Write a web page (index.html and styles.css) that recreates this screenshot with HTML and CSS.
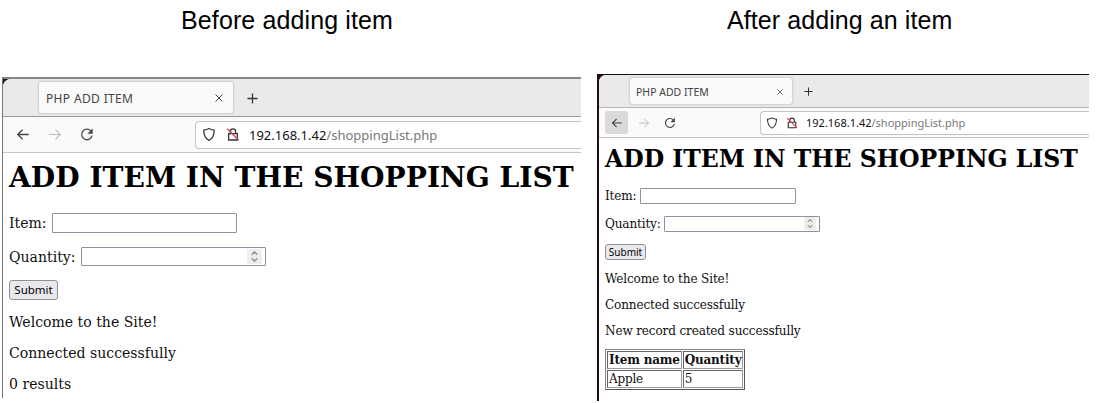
FILE: index.html
```html
<!DOCTYPE html>
<html lang="en">
<head>
<meta charset="utf-8">
<title>Shopping list</title>
<link rel="stylesheet" href="styles.css">
</head>
<body>
<svg class="defs" aria-hidden="true">
  <symbol id="back" viewBox="0 0 16 16"><path d="M14.500 8H2M7.500 2.500 2 8l5.500 5.500" fill="none" stroke="currentColor" stroke-width="1.500"/></symbol>
  <symbol id="forward" viewBox="0 0 16 16"><path d="M1.500 8H14M8.500 2.500 14 8l-5.500 5.500" fill="none" stroke="currentColor" stroke-width="1.300"/></symbol>
  <symbol id="reload" viewBox="0 0 16 16"><path d="M13.800 9.300A6 6 0 1 1 12.300 3.800" fill="none" stroke="currentColor" stroke-width="1.500"/><path d="M14.500 1v6h-6z" fill="currentColor"/></symbol>
  <symbol id="shield" viewBox="0 0 16 16"><path d="M8 1.200c2 1.300 4 1.600 6 1.700 0 5-1.300 9.600-6 11.900C3.300 12.500 2 7.900 2 2.900c2-.1 4-.4 6-1.700z" fill="none" stroke="currentColor" stroke-width="1.400"/></symbol>
  <symbol id="lock" viewBox="0 0 16 16"><path d="M3 7h10v7.300H3zM5 7V4.500a3 3 0 0 1 6 0V7" fill="none" stroke="#333" stroke-width="1.500"/><path d="m1.500 1.500 13 13" stroke="#e0405a" stroke-width="1.700"/></symbol>
  <symbol id="close" viewBox="0 0 10 10"><path d="m1.500 1.500 7 7m0-7-7 7" stroke="currentColor" stroke-width="1"/></symbol>
  <symbol id="plus" viewBox="0 0 12 12"><path d="M6 .5v11M.5 6h11" stroke="currentColor" stroke-width="1.400"/></symbol>
  <symbol id="steps" viewBox="0 0 10 14"><path d="m2 5 3-3 3 3M2 9l3 3 3-3" fill="none" stroke="#999" stroke-width="1.600"/></symbol>
</svg>
<main class="compare">
  <section class="panel before">
    <h2 class="caption">Before adding item</h2>
    <div class="window">
      <div class="frame">
        <div class="tabs">
          <div class="tab"><span class="tab-title">PHP ADD ITEM</span><svg class="close"><use href="#close"/></svg></div>
          <svg class="plus"><use href="#plus"/></svg>
        </div>
        <div class="toolbar">
          <span class="nav back"><svg class="icon"><use href="#back"/></svg></span>
          <span class="nav off"><svg class="icon"><use href="#forward"/></svg></span>
          <span class="nav"><svg class="icon"><use href="#reload"/></svg></span>
          <div class="url"><svg class="icon"><use href="#shield"/></svg><svg class="icon"><use href="#lock"/></svg><span class="address"><span class="host">192.168.1.42</span><span class="path">/shoppingList.php</span></span></div>
        </div>
        <div class="page">
          <h1>ADD ITEM IN THE SHOPPING LIST</h1>
          <div class="field item"><label>Item:</label><span class="box"></span></div>
          <div class="field quantity"><label>Quantity:</label><span class="box"><svg class="steps"><use href="#steps"/></svg></span></div>
          <div class="actions"><button>Submit</button></div>
          <p>Welcome to the Site!</p>
          <p>Connected successfully</p>
          <p>0 results</p>
        </div>
      </div>
    </div>
  </section>
  <section class="panel after">
    <h2 class="caption">After adding an item</h2>
    <div class="window">
      <div class="frame">
        <div class="tabs">
          <div class="tab"><span class="tab-title">PHP ADD ITEM</span><svg class="close"><use href="#close"/></svg></div>
          <svg class="plus"><use href="#plus"/></svg>
        </div>
        <div class="toolbar">
          <span class="nav back"><svg class="icon"><use href="#back"/></svg></span>
          <span class="nav off"><svg class="icon"><use href="#forward"/></svg></span>
          <span class="nav"><svg class="icon"><use href="#reload"/></svg></span>
          <div class="url"><svg class="icon"><use href="#shield"/></svg><svg class="icon"><use href="#lock"/></svg><span class="address"><span class="host">192.168.1.42</span><span class="path">/shoppingList.php</span></span></div>
        </div>
        <div class="page">
          <h1>ADD ITEM IN THE SHOPPING LIST</h1>
          <div class="field item"><label>Item:</label><span class="box"></span></div>
          <div class="field quantity"><label>Quantity:</label><span class="box"><svg class="steps"><use href="#steps"/></svg></span></div>
          <div class="actions"><button>Submit</button></div>
          <p>Welcome to the Site!</p>
          <p>Connected successfully</p>
          <p>New record created successfully</p>
          <table>
            <tr><th>Item name</th><th>Quantity</th></tr>
            <tr><td>Apple</td><td>5</td></tr>
          </table>
        </div>
      </div>
    </div>
  </section>
</main>
</body>
</html>
```
FILE: styles.css
```css
* { box-sizing: border-box; }
body { margin: 0; background: #fff; overflow: hidden; color: #111; }
svg { display: block; flex: none; }
.defs { display: none; }
.compare { display: flex; gap: 16px; padding-left: 2px; height: 403px; }
.panel { display: flex; flex-direction: column; }
.before { width: 579px; }
.after { width: 492px; }
.caption { margin: 0; font: 400 25px/41px "Liberation Sans", Arial, sans-serif; color: #000; white-space: nowrap; }
.before .caption { height: 77px; padding-left: 179px; letter-spacing: .12px; }
.after .caption { height: 74px; padding-left: 130px; letter-spacing: .08px; }
.window { background: #2a0c1c; }
.frame { height: 100%; overflow: hidden; background: #fff; }
.before .window { height: 321px; border-top: 2px solid #858585; border-left: 1px solid #777; }
.before .frame { border-top-left-radius: 8px; }
.after .window { height: 327px; border-top: 1px solid #111; border-left: 2px solid #220a16; }
.after .frame { border-top-left-radius: 7px; }

.tabs { display: flex; background: #eaeaea; border-bottom: 1px solid #b5b5b5; }
.before .tabs { height: 38px; padding: 2px 0 0 35px; gap: 13px; border-color: #999; }
.after .tabs { height: 33px; padding: 2px 0 0 30px; gap: 11px; }
.tab { display: flex; align-items: center; justify-content: space-between; background: #fafafa; border: 1px solid #d4d4d4; border-radius: 4px; box-shadow: 0 0 2px #ccc; font-family: "Noto Sans", sans-serif; color: #444; white-space: nowrap; }
.before .tab { width: 196px; height: 33px; padding: 1px 9px 0 7px; font-size: 12px; letter-spacing: .35px; }
.after .tab { width: 164px; height: 28px; padding: 1px 8px 0 6px; font-size: 10.5px; letter-spacing: 0; }
.before .close { width: 10px; height: 10px; }
.after .close { width: 8px; height: 8px; }
.plus { color: #333; }
.before .plus { width: 11px; height: 11px; margin-top: 12px; }
.after .plus { width: 9px; height: 9px; margin-top: 10px; }

.toolbar { display: flex; align-items: center; background: #fafafa; border-bottom: 1px solid #c5c5c5; }
.before .toolbar { height: 36px; padding-left: 4px; }
.after .toolbar { height: 30px; padding-left: 6px; }
.nav { display: flex; align-items: center; justify-content: center; color: #444; border-radius: 3px; }
.before .nav { width: 32px; height: 28px; }
.after .nav { width: 23px; height: 23px; margin-right: 4px; }
.after .back { background: #dadada; }
.after .off { margin-right: 3px; }
.nav.off { color: #bbb; }
.before .icon { width: 14px; height: 15px; }
.after .icon { width: 12px; height: 12px; }
.url { flex: 1; display: flex; align-items: center; background: #fff; border: 1px solid #c4c4c4; border-right: 0; border-radius: 4px 0 0 4px; color: #333; font-family: "Noto Sans", sans-serif; }
.before .url { height: 28px; margin-left: 92px; padding-left: 6px; gap: 10px; font-size: 13px; }
.after .url { height: 24px; margin-left: 75px; padding-left: 5px; gap: 8px; font-size: 11px; }
.address { display: flex; white-space: nowrap; }
.before .address { margin-left: -1px; }
.host { color: #111; }
.path { color: #777; }

.page { font-family: "DejaVu Serif", serif; white-space: nowrap; }
.before .page { padding-left: 6px; font-size: 14.07px; }
.after .page { padding-left: 6px; font-size: 12.1px; letter-spacing: -.17px; }
h1, p { margin: 0; }
h1 { font-size: 2em; color: #000; }
.before h1 { line-height: 50px; }
.after h1 { font-size: 23.6px; line-height: 42px; letter-spacing: -.03px; }
.before p { line-height: 31px; }
.after p { line-height: 26px; }
.field, .actions { display: flex; align-items: center; }
.box { display: flex; justify-content: flex-end; border: 1px solid #8f8f9d; border-radius: 1px; background: #fff; }
.before .box { width: 185px; height: 20px; }
.after .box { width: 156px; height: 16px; }
.before .item { height: 40px; }
.before .item label { width: 43px; }
.before .quantity { height: 27px; }
.before .quantity label { width: 72px; }
.before .quantity .box { height: 19px; }
.after .item { height: 32px; }
.after .item label { width: 35px; }
.after .quantity { height: 24px; }
.after .quantity label { width: 59px; }
.steps { background: #eee; }
.before .steps { width: 15px; height: 15px; margin: 1px 3px 0 0; padding: 1px 2px; }
.after .steps { width: 12px; height: 13px; margin: 0 3px 0 0; padding: 1px 2px; }
.before .actions { height: 37px; padding-top: 2px; }
.after .actions { height: 30px; padding-top: 2px; }
button { border: 1px solid #8f8f9d; border-radius: 3px; background: #e9e9ed; color: #000; padding: 0; font-family: "Noto Sans", sans-serif; line-height: 1; }
.before button { width: 49px; height: 20px; font-size: 11.5px; }
.after button { width: 41px; height: 16px; font-size: 10px; }
table { margin-top: 5px; width: 140px; height: 41px; border: 1px solid #888; border-right-color: #555; border-bottom-color: #555; border-spacing: 1px; font-size: 12px; letter-spacing: -.2px; line-height: 14px; }
th, td { padding: 1px; border: 1px solid #999; border-top-color: #666; border-left-color: #666; text-align: left; }
```
